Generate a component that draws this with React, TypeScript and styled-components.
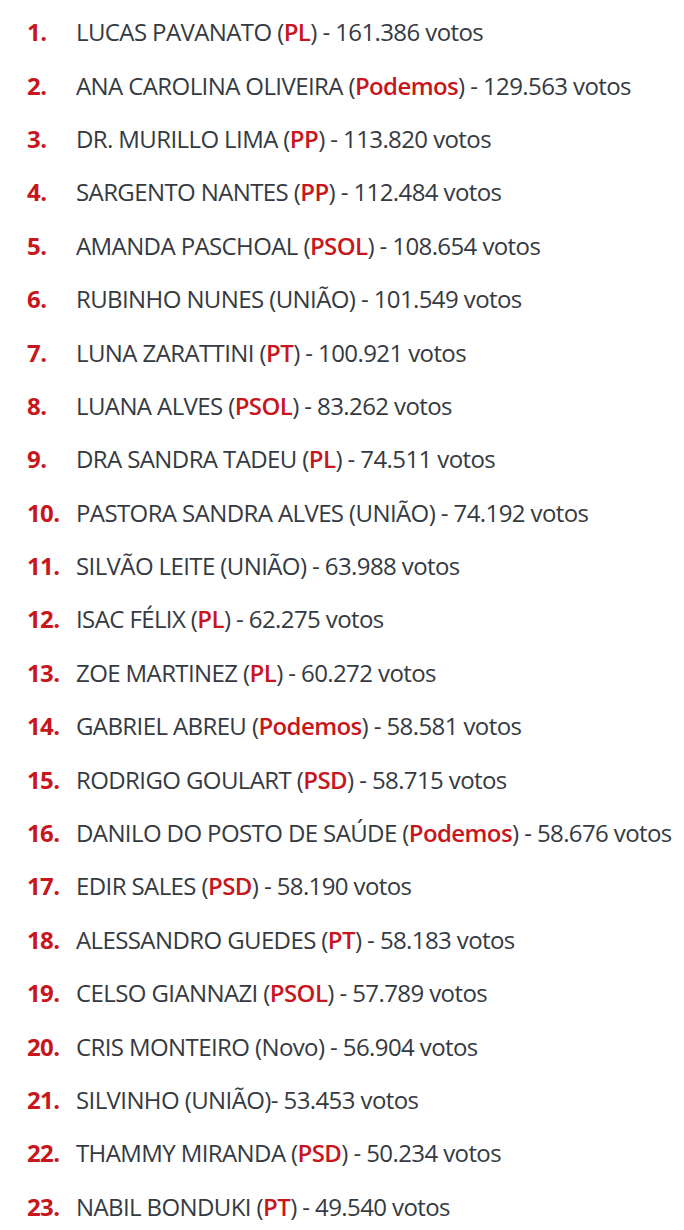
import React from "react";
import styled, { createGlobalStyle } from "styled-components";

const GlobalStyle = createGlobalStyle`
  html, body {
    margin: 0;
    padding: 0;
    background: #ffffff;
  }
`;

type Candidate = {
  name: string;
  party: string;
  highlight?: boolean;
  votes: string;
  noSpace?: boolean;
};

const candidates: Candidate[] = [
  { name: "LUCAS PAVANATO", party: "PL", highlight: true, votes: "161.386" },
  { name: "ANA CAROLINA OLIVEIRA", party: "Podemos", highlight: true, votes: "129.563" },
  { name: "DR. MURILLO LIMA", party: "PP", highlight: true, votes: "113.820" },
  { name: "SARGENTO NANTES", party: "PP", highlight: true, votes: "112.484" },
  { name: "AMANDA PASCHOAL", party: "PSOL", highlight: true, votes: "108.654" },
  { name: "RUBINHO NUNES", party: "UNIÃO", votes: "101.549" },
  { name: "LUNA ZARATTINI", party: "PT", highlight: true, votes: "100.921" },
  { name: "LUANA ALVES", party: "PSOL", highlight: true, votes: "83.262" },
  { name: "DRA SANDRA TADEU", party: "PL", highlight: true, votes: "74.511" },
  { name: "PASTORA SANDRA ALVES", party: "UNIÃO", votes: "74.192" },
  { name: "SILVÃO LEITE", party: "UNIÃO", votes: "63.988" },
  { name: "ISAC FÉLIX", party: "PL", highlight: true, votes: "62.275" },
  { name: "ZOE MARTINEZ", party: "PL", highlight: true, votes: "60.272" },
  { name: "GABRIEL ABREU", party: "Podemos", highlight: true, votes: "58.581" },
  { name: "RODRIGO GOULART", party: "PSD", highlight: true, votes: "58.715" },
  { name: "DANILO DO POSTO DE SAÚDE", party: "Podemos", highlight: true, votes: "58.676" },
  { name: "EDIR SALES", party: "PSD", highlight: true, votes: "58.190" },
  { name: "ALESSANDRO GUEDES", party: "PT", highlight: true, votes: "58.183" },
  { name: "CELSO GIANNAZI", party: "PSOL", highlight: true, votes: "57.789" },
  { name: "CRIS MONTEIRO", party: "Novo", votes: "56.904" },
  { name: "SILVINHO", party: "UNIÃO", votes: "53.453", noSpace: true },
  { name: "THAMMY MIRANDA", party: "PSD", highlight: true, votes: "50.234" },
  { name: "NABIL BONDUKI", party: "PT", highlight: true, votes: "49.540" },
];

const List = styled.ol`
  list-style: none;
  margin: 0;
  padding: 5px 0 0 27px;
  font-family: "Open Sans", "Liberation Sans", sans-serif;
  font-size: 24px;
  letter-spacing: -0.6px;
  color: #353a42;
`;

const Item = styled.li`
  display: grid;
  grid-template-columns: 49px 1fr;
  align-items: center;
  height: 53.4px;
  white-space: nowrap;
`;

const Rank = styled.span`
  color: #c8161d;
  font-weight: 700;
`;

const Party = styled.span<{ $highlight?: boolean }>`
  color: ${(p) => (p.$highlight ? "#c8161d" : "inherit")};
  font-weight: ${(p) => (p.$highlight ? 600 : 400)};
`;

const App = () => (
  <>
    <GlobalStyle />
    <List>
      {candidates.map((c, i) => (
        <Item key={c.name}>
          <Rank>{i + 1}.</Rank>
          <span>
            {c.name} (<Party $highlight={c.highlight}>{c.party}</Party>)
            {c.noSpace ? "" : " "}- {c.votes} votos
          </span>
        </Item>
      ))}
    </List>
  </>
);

export default App;
